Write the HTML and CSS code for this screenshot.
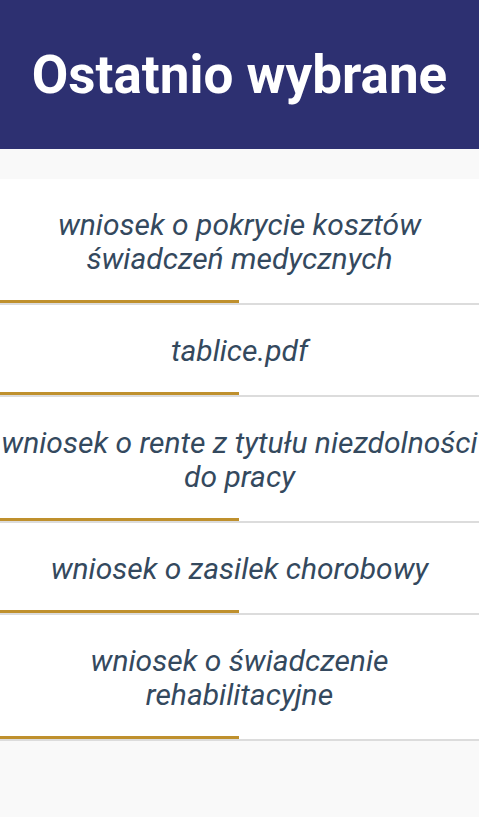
FILE: index.html
```html
<!DOCTYPE html>
<html lang="pl">
<head>
<meta charset="utf-8">
<title>Ostatnio wybrane</title>
<link rel="stylesheet" href="styles.css">
</head>
<body>
<header class="top">
  <h1 class="title">Ostatnio wybrane</h1>
</header>
<main class="content">
  <ul class="list">
    <li class="item">wniosek o pokrycie kosztów świadczeń medycznych</li>
    <li class="item">tablice.pdf</li>
    <li class="item">wniosek o rente z tytułu niezdolności do pracy</li>
    <li class="item">wniosek o zasilek chorobowy</li>
    <li class="item">wniosek o świadczenie rehabilitacyjne</li>
  </ul>
</main>
</body>
</html>
```
FILE: styles.css
```css
html, body {
  margin: 0;
  padding: 0;
}
body {
  background: #f9f9f9;
  font-family: Roboto, "Liberation Sans", sans-serif;
  width: 479px;
  min-height: 817px;
}
.top {
  background: #2d3071;
  height: 149px;
  display: flex;
  align-items: center;
  justify-content: center;
}
.title {
  margin: 0;
  color: #ffffff;
  font-weight: 700;
  font-size: 53px;
  line-height: 1;
  padding-top: 2px;
}
.content {
  padding-top: 30px;
}
.list {
  list-style: none;
  margin: 0;
  padding: 0;
}
.item {
  position: relative;
  background: #ffffff;
  color: #34495e;
  font-style: italic;
  font-size: 30px;
  line-height: 34px;
  text-align: center;
  padding: 29px 0 27px;
  border-bottom: 2px solid #dcdcdc;
}
.item::after {
  content: "";
  position: absolute;
  left: 0;
  bottom: 0;
  width: 239px;
  height: 3px;
  background: #bf902d;
}
```
